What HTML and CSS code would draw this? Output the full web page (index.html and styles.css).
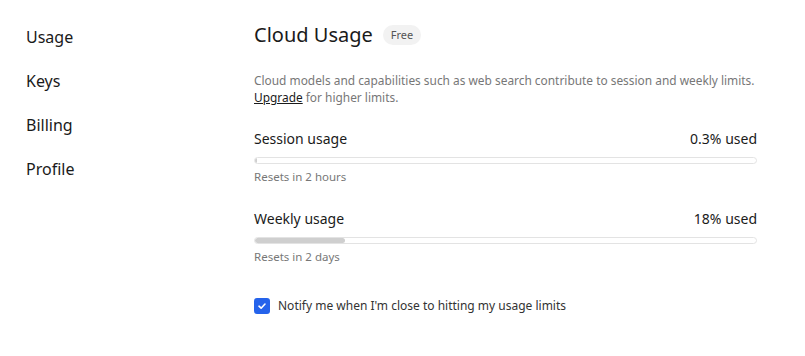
FILE: index.html
```html
<!DOCTYPE html>
<html lang="en">
<head>
<meta charset="UTF-8">
<title>Settings - Usage</title>
<link rel="stylesheet" href="styles.css">
</head>
<body>
<div class="page">
    <!-- Sidebar -->
    <nav class="sidebar">
        <a class="nav-item" href="#">Usage</a>
        <a class="nav-item" href="#">Keys</a>
        <a class="nav-item" href="#">Billing</a>
        <a class="nav-item" href="#">Profile</a>
    </nav>

    <!-- Main -->
    <main class="content">
        <div class="title-row">
            <h1>Cloud Usage</h1>
            <span class="badge">Free</span>
        </div>

        <p class="desc">
            Cloud models and capabilities such as web search contribute to session and weekly limits.<br>
            <a href="#">Upgrade</a> for higher limits.
        </p>

        <div class="usage">
            <div class="usage-head">
                <span>Session usage</span>
                <span>0.3% used</span>
            </div>
            <div class="bar"><div class="bar-fill" style="width: 0.3%"></div></div>
            <div class="resets">Resets in 2 hours</div>
        </div>

        <div class="usage">
            <div class="usage-head">
                <span>Weekly usage</span>
                <span>18% used</span>
            </div>
            <div class="bar"><div class="bar-fill" style="width: 18%"></div></div>
            <div class="resets">Resets in 2 days</div>
        </div>

        <label class="notify">
            <span class="checkbox">
                <svg width="10" height="10" viewBox="0 0 10 10"><path d="M2 5.2 L4.1 7.2 L8 3" fill="none" stroke="#fff" stroke-width="1.6" stroke-linecap="round" stroke-linejoin="round"/></svg>
            </span>
            Notify me when I'm close to hitting my usage limits
        </label>
    </main>
</div>
</body>
</html>
```

FILE: styles.css
```css
body {
    margin: 0;
    background-color: #fff;
    font-family: "Noto Sans", "Open Sans", sans-serif;
    color: #1a1a1a;
}

.page {
    display: flex;
    padding-top: 22px;
}

/* Sidebar */
.sidebar {
    width: 254px;
    padding-left: 26px;
    padding-top: 3px;
    box-sizing: border-box;
    display: flex;
    flex-direction: column;
    gap: 20px;
}

.nav-item {
    font-size: 16px;
    line-height: 24px;
    color: #1a1a1a;
    text-decoration: none;
}

/* Main */
.content {
    width: 503px;
}

.title-row {
    display: flex;
    align-items: center;
    gap: 10px;
}

h1 {
    margin: 0;
    font-size: 20px;
    font-weight: 400;
    line-height: 26px;
}

.badge {
    background-color: #f2f2f2;
    color: #555;
    font-size: 11px;
    line-height: 20px;
    padding: 0 8px;
    border-radius: 10px;
}

.desc {
    margin: 24px 0 0;
    font-size: 11.9px;
    line-height: 17px;
    color: #777;
    white-space: nowrap;
}

.desc a {
    color: #1a1a1a;
    text-decoration: underline;
}

.usage {
    margin-top: 23px;
}

.usage + .usage {
    margin-top: 24px;
}

.usage-head {
    display: flex;
    justify-content: space-between;
    font-size: 14px;
    line-height: 20px;
}

.bar {
    margin-top: 8px;
    height: 7px;
    border: 1px solid #e3e3e3;
    border-radius: 4px;
    box-sizing: border-box;
    overflow: hidden;
}

.bar-fill {
    height: 100%;
    background-color: #cfcfcf;
    border-radius: 4px;
}

.resets {
    margin-top: 4px;
    font-size: 11.5px;
    line-height: 17px;
    color: #777;
}

.notify {
    margin-top: 32px;
    display: flex;
    align-items: center;
    gap: 8px;
    font-size: 12px;
    line-height: 17px;
    color: #333;
}

.checkbox {
    width: 16px;
    height: 16px;
    border-radius: 3px;
    background-color: #2563eb;
    display: flex;
    align-items: center;
    justify-content: center;
}
```
